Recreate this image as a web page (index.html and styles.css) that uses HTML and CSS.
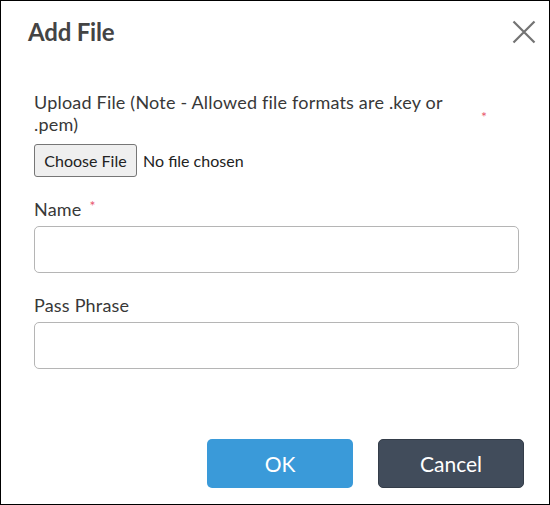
FILE: index.html
```html
<!DOCTYPE html>
<html lang="en">
<head>
<meta charset="utf-8">
<title>Add File</title>
<link rel="stylesheet" href="styles.css">
</head>
<body>
<div class="dialog">
  <header class="dialog-header">
    <h1 class="dialog-title">Add File</h1>
    <button class="close-btn" type="button" aria-label="Close">
      <svg width="24" height="24" viewBox="0 0 24 24"><path d="M1.5 1.5 L22.5 22.5 M22.5 1.5 L1.5 22.5" stroke="#737373" stroke-width="2.2" fill="none"/></svg>
    </button>
  </header>
  <main class="dialog-body">
    <div class="field field-upload">
      <label class="label label-upload">
        <span class="label-text">Upload File (Note - Allowed file formats are .key or .pem)</span>
        <span class="req req-mid">*</span>
      </label>
      <div class="file-picker">
        <button class="file-btn" type="button">Choose File</button>
        <span class="file-status">No file chosen</span>
      </div>
    </div>
    <div class="field">
      <label class="label">Name<span class="req req-sup">*</span></label>
      <input class="text-input" type="text">
    </div>
    <div class="field">
      <label class="label">Pass Phrase</label>
      <input class="text-input" type="password">
    </div>
  </main>
  <footer class="dialog-footer">
    <button class="btn btn-ok" type="button">OK</button>
    <button class="btn btn-cancel" type="button">Cancel</button>
  </footer>
</div>
</body>
</html>
```
FILE: styles.css
```css
* { box-sizing: border-box; }
html, body { margin: 0; padding: 0; background: #fff; }
body { font-family: Lato, "Open Sans", sans-serif; color: #333; }

.dialog {
  width: 550px;
  height: 505px;
  border: 1px solid #000;
  display: flex;
  flex-direction: column;
  background: #fff;
}

.dialog-header {
  display: flex;
  align-items: center;
  justify-content: space-between;
  padding: 17px 13px 0 27px;
}
.dialog-title {
  margin: 0;
  font-size: 24px;
  font-weight: 700;
  color: #444;
  line-height: 28px;
  letter-spacing: -0.2px;
}
.close-btn {
  border: 0;
  background: none;
  padding: 0;
  width: 24px;
  height: 24px;
  display: flex;
  cursor: pointer;
}

.dialog-body {
  padding: 45px 30px 0 33px;
  display: flex;
  flex-direction: column;
  gap: 21px;
}

.field { display: flex; flex-direction: column; }

.label {
  font-size: 18px;
  line-height: 22px;
  color: #383838;
  letter-spacing: 0.2px;
  margin-bottom: 6px;
}
.label-upload {
  display: flex;
  align-items: center;
  margin-bottom: 9px;
}
.label-upload .label-text { width: 440px; }
.req { color: #e8576e; font-size: 14px; letter-spacing: 0; }
.req-mid { margin-left: 7px; margin-top: 7px; }
.req-sup { margin-left: 8px; vertical-align: top; line-height: 16px; }

.file-picker {
  display: flex;
  align-items: center;
  gap: 6px;
}
.file-btn {
  font-family: Lato, "Open Sans", sans-serif;
  font-size: 16px;
  color: #222;
  background: #efefef;
  border: 1px solid #767676;
  border-radius: 3px;
  height: 33px;
  width: 103px;
  padding: 0;
}
.file-status { font-size: 16px; color: #222; }

.text-input {
  width: 485px;
  height: 47px;
  border: 1px solid #b5b5b5;
  border-radius: 5px;
  font-family: inherit;
  font-size: 16px;
  padding: 0 12px;
}

.dialog-footer {
  margin-top: auto;
  display: flex;
  justify-content: flex-end;
  gap: 25px;
  padding: 0 25px 16px 0;
}
.btn {
  width: 146px;
  height: 49px;
  border: 0;
  border-radius: 5px;
  color: #fff;
  font-family: Lato, "Open Sans", sans-serif;
  font-size: 21px;
}
.btn-ok { background: #3a9ad9; }
.btn-cancel { background: #414c5b; border: 1px solid #343d49; }
```
